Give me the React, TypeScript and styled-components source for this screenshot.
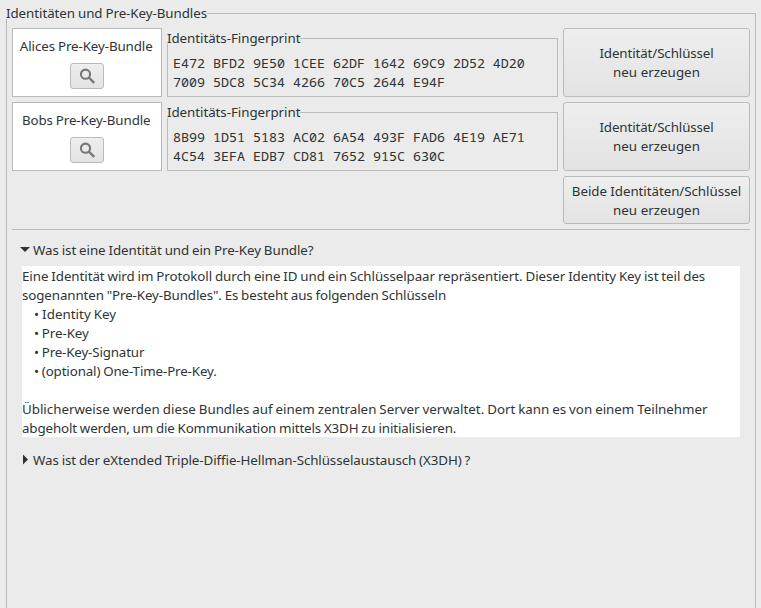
import React from 'react';
import styled, { createGlobalStyle } from 'styled-components';

const line = '#b9bbba';
const surface = '#ebebeb';
const ink = '#2e3436';

const GlobalStyle = createGlobalStyle`
  * { box-sizing: border-box; }
  html, body { margin: 0; height: 100%; }
  body {
    background: ${surface};
    color: ${ink};
    font: 13.333px/19px "Noto Sans", sans-serif;
    word-spacing: -0.47px;
    letter-spacing: -0.05px;
    overflow: hidden;
  }
`;

const Window = styled.div`
  height: 608px;
  padding: 13px 5px 0 6px;
  overflow: hidden;
`;

const Frame = styled.section`
  border: 1px solid ${line};
  display: flex;
  flex-direction: column;
  align-items: stretch;
`;

const OuterFrame = styled(Frame)`
  height: 620px;
`;

const KeyFrame = styled(Frame)`
  margin-top: 10px;
`;

const Legend = styled.h2`
  align-self: flex-start;
  margin: -7px 0 0 -1px;
  height: 12px;
  background: ${surface};
  font-size: inherit;
  font-weight: 400;
  line-height: 12px;
  white-space: nowrap;
`;

const Content = styled.div`
  padding: 9px 5px 0;
`;

const KeyGrid = styled.div`
  display: grid;
  grid-template-columns: 150px 391px 187px;
  grid-template-rows: 69px 69px 48px;
  gap: 5px;
  padding-bottom: 5px;
  border-bottom: 1px solid ${line};
`;

const BundleCard = styled.div`
  display: flex;
  flex-direction: column;
  align-items: center;
  gap: 7px;
  padding-top: 8px;
  border: 1px solid ${line};
  background: #fff;
  letter-spacing: -0.09px;
  white-space: nowrap;
`;

const Owner = styled.span`
  padding-right: 1.5px;
`;

const Button = styled.button`
  border: 1px solid ${line};
  border-radius: 3px;
  background: linear-gradient(#eeeeee, #e3e3e3);
  box-shadow: inset 0 1px #f1f1f1;
  color: inherit;
  font: inherit;
  padding: 0;
  white-space: nowrap;
`;

const WideButton = styled(Button)<{ $shift?: number }>`
  grid-column: 3;
  padding-top: ${({ $shift = 0 }) => $shift}px;
`;

const Text = styled.span<{ $tracking: number }>`
  display: block;
  letter-spacing: ${({ $tracking }) => $tracking}px;
`;

const IconButton = styled(Button)`
  display: flex;
  align-items: center;
  justify-content: center;
  width: 34px;
  height: 26px;
`;

const Fingerprint = styled.div`
  padding: 10px 0 0 5px;
  font-family: "Noto Sans Mono", "DejaVu Sans Mono", monospace;
  letter-spacing: 0;
  word-spacing: 0;
  white-space: pre;
`;

const Sections = styled.div`
  padding: 11px 10px 0 8px;
`;

const Toggle = styled.div`
  display: flex;
  align-items: center;
  height: 19px;
  white-space: nowrap;
`;

const Arrow = styled.svg`
  flex: none;
  width: 13px;
  height: 14px;
`;

const Explanation = styled.div`
  margin: 6px 0 14px 2px;
  padding-top: 1px;
  height: 171px;
  background: #fff;
`;

const Paragraph = styled.p`
  margin: 0;
  white-space: nowrap;
`;

const KeyList = styled.ul`
  list-style: none;
  margin: 0 0 19px;
  padding: 0 0 0 12px;
`;

const SearchIcon = () => (
  <svg width="16" height="16" viewBox="0 0 16 16" fill="none" stroke="#757778">
    <circle cx="6.5" cy="6.2" r="4.6" strokeWidth="2.1" />
    <path d="M9.8 9.5 L15.2 14.8" strokeWidth="2.4" />
  </svg>
);

const bundles = [
  {
    owner: 'Alices',
    lines: ['E472 BFD2 9E50 1CEE 62DF 1642 69C9 2D52 4D20', '7009 5DC8 5C34 4266 70C5 2644 E94F'],
  },
  {
    owner: 'Bobs',
    lines: ['8B99 1D51 5183 AC02 6A54 493F FAD6 4E19 AE71', '4C54 3EFA EDB7 CD81 7652 915C 630C'],
  },
];

const keys = [
  { name: 'Identity Key', tracking: 0.04 },
  { name: 'Pre-Key', tracking: -0.08 },
  { name: 'Pre-Key-Signatur', tracking: -0.15 },
  { name: '(optional) One-Time-Pre-Key.', tracking: -0.12 },
];

export default function App() {
  return (
    <Window>
      <GlobalStyle />
      <OuterFrame>
        <Legend>Identitäten und Pre-Key-Bundles</Legend>
        <Content>
          <KeyGrid>
            {bundles.map((bundle) => (
              <React.Fragment key={bundle.owner}>
                <BundleCard>
                  <Owner>{bundle.owner} Pre-Key-Bundle</Owner>
                  <IconButton aria-label="Anzeigen">
                    <SearchIcon />
                  </IconButton>
                </BundleCard>
                <KeyFrame>
                  <Legend>Identitäts-Fingerprint</Legend>
                  <Fingerprint>{bundle.lines.join('\n')}</Fingerprint>
                </KeyFrame>
                <WideButton>
                  <Text $tracking={-0.1}>Identität/Schlüssel</Text>
                  <Text $tracking={0.04}>neu erzeugen</Text>
                </WideButton>
              </React.Fragment>
            ))}
            <WideButton $shift={2}>
              <Text $tracking={-0.05}>Beide Identitäten/Schlüssel</Text>
              <Text $tracking={0.04}>neu erzeugen</Text>
            </WideButton>
          </KeyGrid>
          <Sections>
            <Toggle>
              <Arrow viewBox="0 0 13 14">
                <path d="M0 3 H10 L5 8 Z" fill={ink} />
              </Arrow>
              <Text $tracking={-0.065}>Was ist eine Identität und ein Pre-Key Bundle?</Text>
            </Toggle>
            <Explanation>
              <Paragraph>
                <Text $tracking={-0.06}>
                  Eine Identität wird im Protokoll durch eine ID und ein Schlüsselpaar repräsentiert. Dieser Identity Key ist teil des
                </Text>
                <Text $tracking={-0.1}>
                  sogenannten "Pre-Key-Bundles". Es besteht aus folgenden Schlüsseln
                </Text>
              </Paragraph>
              <KeyList>
                {keys.map(({ name, tracking }) => (
                  <li key={name}>
                    <Text $tracking={tracking}>• {name}</Text>
                  </li>
                ))}
              </KeyList>
              <Paragraph>
                <Text $tracking={-0.01}>
                  Üblicherweise werden diese Bundles auf einem zentralen Server verwaltet. Dort kann es von einem Teilnehmer
                </Text>
                <Text $tracking={-0.125}>
                  abgeholt werden, um die Kommunikation mittels X3DH zu initialisieren.
                </Text>
              </Paragraph>
            </Explanation>
            <Toggle>
              <Arrow viewBox="0 0 13 14">
                <path d="M3 0.5 V10.5 L8 5.5 Z" fill={ink} />
              </Arrow>
              <Text $tracking={-0.08}>Was ist der eXtended Triple-Diffie-Hellman-Schlüsselaustausch (X3DH) ?</Text>
            </Toggle>
          </Sections>
        </Content>
      </OuterFrame>
    </Window>
  );
}
